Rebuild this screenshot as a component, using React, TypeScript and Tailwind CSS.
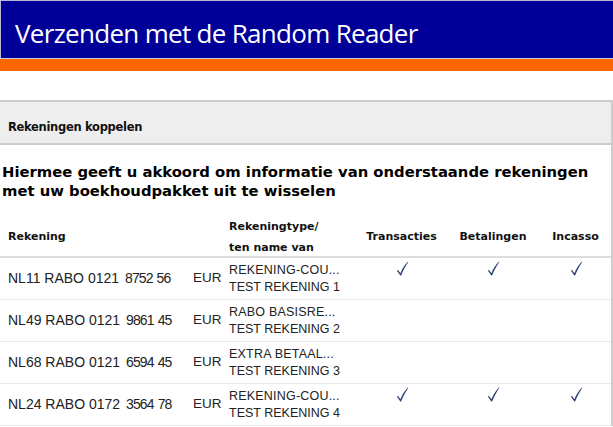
import React from 'react';

type Rekening = {
    nummer: string;
    suffix: string;
    type: string;
    naam: string;
    rechten: boolean;
};

// types are shown cut short, as the bank's own screen does
const rekeningen: Rekening[] = [
    { nummer: 'NL11 RABO 0121', suffix: '8752 56', type: 'REKENING-COU...', naam: 'TEST REKENING 1', rechten: true },
    { nummer: 'NL49 RABO 0121', suffix: '9861 45', type: 'RABO BASISRE...', naam: 'TEST REKENING 2', rechten: false },
    { nummer: 'NL68 RABO 0121', suffix: '6594 45', type: 'EXTRA BETAAL...', naam: 'TEST REKENING 3', rechten: false },
    { nummer: 'NL24 RABO 0172', suffix: '3564 78', type: 'REKENING-COU...', naam: 'TEST REKENING 4', rechten: true },
];

const Vinkje = () => (
    <svg width="14" height="16" viewBox="0 0 14 16" className="block">
        <path d="M1.8 9.4 L3 8.9 L5.4 12.2 C7.4 7.6 9.8 3.8 13 0.6 L13.3 0.9 C10.6 4.6 8.2 9 6.1 14.6 L5.3 14.6 Z" fill="#2e4279" />
    </svg>
);

const cols = 'grid grid-cols-[185px_40px_132px_89px_94px_71px]';

export default function App() {
    return (
        <div className="w-[613px] h-[427px] overflow-hidden bg-white">
            <div className="h-[58px] bg-[#000099] border-t border-l border-[#b8b8d8] flex items-center pl-[14px]">
                <span className="text-white text-[26px] tracking-[-0.7px] font-['Open_Sans',sans-serif] leading-none pt-[6px]">
                    Verzenden met de Random Reader
                </span>
            </div>
            <div className="h-px bg-[#c8c8d8]" />
            <div className="h-[12px] bg-[#ff6600]" />
            <div className="h-[29px]" />

            <div className="border-r-2 border-[#cccccc]">
                <div className="h-[45px] bg-[#eeeeee] border-t-2 border-b-2 border-[#cccccc] flex items-end pb-[7px] pl-[8px]">
                    <span className="font-['DejaVu_Sans',sans-serif] font-bold text-[11.5px] tracking-[-0.3px] text-[#111]">Rekeningen koppelen</span>
                </div>

                <p className="pt-[17px] pl-[2px] pb-[12px] font-['DejaVu_Sans',sans-serif] font-bold text-[14.8px] leading-[19px] text-black">
                    Hiermee geeft u akkoord om informatie van onderstaande rekeningen
                    <br />
                    met uw boekhoudpakket uit te wisselen
                </p>

                <div className={`${cols} h-[46px] pt-[4px] border-b-2 border-[#dddddd] font-['DejaVu_Sans',sans-serif] font-bold text-[11px] text-[#111] items-center`}>
                    <div className="pl-[8px]">Rekening</div>
                    <div />
                    <div className="pl-[4px] leading-[21px]">
                        Rekeningtype/
                        <br />
                        ten name van
                    </div>
                    <div className="text-center">Transacties</div>
                    <div className="text-center">Betalingen</div>
                    <div className="text-center">Incasso</div>
                </div>

                {rekeningen.map((r) => {
                    const [blok, rest] = r.suffix.split(' ');
                    return (
                        <div
                            key={r.naam}
                            className={`${cols} h-[42px] border-b border-[#e8e8e8] font-['Liberation_Sans',sans-serif] text-[#222] items-center`}
                        >
                            <div className="pl-[8px] whitespace-nowrap text-[14px] flex">
                                <span>{r.nummer}</span>
                                <span className="ml-[6px] tracking-[-0.9px]">{blok}</span>
                                <span className="ml-[4px] tracking-[-0.9px]">{rest}</span>
                            </div>
                            <div className="pl-[8px] text-[13.5px]">EUR</div>
                            <div className="pl-[4px] leading-[17px] text-[12.5px] whitespace-nowrap">
                                <div className="tracking-[0.2px]">{r.type}</div>
                                <div>{r.naam}</div>
                            </div>
                            {[0, 1, 2].map((i) => (
                                <div key={i} className="flex justify-center self-start pt-[3px]">
                                    {r.rechten && <Vinkje />}
                                </div>
                            ))}
                        </div>
                    );
                })}
            </div>
        </div>
    );
}
